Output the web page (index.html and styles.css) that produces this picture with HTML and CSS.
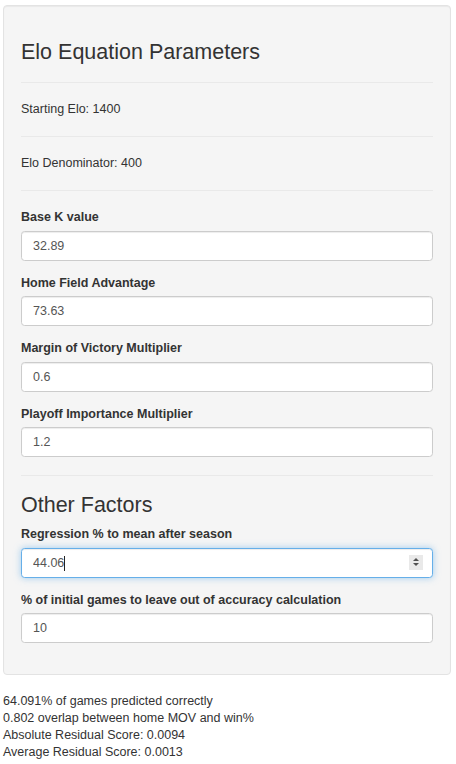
FILE: index.html
```html
<!DOCTYPE html>
<html lang="en">
<head>
<meta charset="utf-8">
<title>Elo Equation Parameters</title>
<link rel="stylesheet" href="styles.css">
</head>
<body>
<main class="page">
  <form class="well">
    <h3 class="section-title">Elo Equation Parameters</h3>
    <hr class="rule">
    <div class="stat">Starting Elo: 1400</div>
    <hr class="rule">
    <div class="stat">Elo Denominator: 400</div>
    <hr class="rule">
    <div class="form-group">
      <label class="control-label" for="k">Base K value</label>
      <input class="form-control" id="k" type="number" value="32.89">
    </div>
    <div class="form-group">
      <label class="control-label" for="hfa">Home Field Advantage</label>
      <input class="form-control" id="hfa" type="number" value="73.63">
    </div>
    <div class="form-group">
      <label class="control-label" for="mov">Margin of Victory Multiplier</label>
      <input class="form-control" id="mov" type="number" value="0.6">
    </div>
    <div class="form-group">
      <label class="control-label" for="po">Playoff Importance Multiplier</label>
      <input class="form-control" id="po" type="number" value="1.2">
    </div>
    <hr class="rule">
    <h3 class="section-title">Other Factors</h3>
    <div class="form-group">
      <label class="control-label" for="reg">Regression % to mean after season</label>
      <div class="input-wrap">
        <input class="form-control is-focused" id="reg" type="number" value="44.06">
        <span class="caret-line"></span>
        <span class="spinner"><span class="tri-up"></span><span class="tri-down"></span></span>
      </div>
    </div>
    <div class="form-group">
      <label class="control-label" for="skip">% of initial games to leave out of accuracy calculation</label>
      <input class="form-control" id="skip" type="number" value="10">
    </div>
  </form>
  <div class="results">
    <div>64.091% of games predicted correctly</div>
    <div>0.802 overlap between home MOV and win%</div>
    <div>Absolute Residual Score: 0.0094</div>
    <div>Average Residual Score: 0.0013</div>
  </div>
</main>
</body>
</html>
```
FILE: styles.css
```css
* { box-sizing: border-box; }

html, body {
  margin: 0;
  padding: 0;
  background: #fff;
}

body {
  font-family: "Liberation Sans", Arial, sans-serif;
  font-size: 12.5px;
  line-height: 17px;
  color: #333;
}

.page {
  padding: 5px 5px 0 3px;
}

.well {
  display: block;
  margin: 0 0 18px 0;
  padding: 17px;
  background: #f5f5f5;
  border: 1px solid #e3e3e3;
  border-radius: 4px;
  box-shadow: inset 0 1px 1px rgba(0, 0, 0, 0.05);
}

.section-title {
  margin: 18px 0 9px;
  font-size: 21.5px;
  line-height: 23px;
  font-weight: 500;
  color: #333;
}

.rule {
  margin: 18px 0;
  border: 0;
  border-top: 1px solid #e9e9e9;
  height: 0;
}

.stat {
  line-height: 17px;
}

.form-group {
  margin-bottom: 14px;
}

.control-label {
  display: inline-block;
  max-width: 100%;
  margin-bottom: 4.5px;
  font-weight: bold;
  line-height: 17px;
}

.form-control {
  display: block;
  width: 100%;
  height: 30px;
  margin: 0;
  padding: 5px 11px;
  font-family: inherit;
  font-size: 12.5px;
  line-height: 18px;
  color: #555;
  background: #fff;
  border: 1px solid #ccc;
  border-radius: 3.6px;
  box-shadow: inset 0 1px 1px rgba(0, 0, 0, 0.075);
  outline: none;
  -moz-appearance: textfield;
}

.form-control::-webkit-inner-spin-button,
.form-control::-webkit-outer-spin-button {
  -webkit-appearance: none;
  margin: 0;
}

.form-control.is-focused {
  border-color: #66afe9;
  box-shadow: inset 0 1px 1px rgba(0, 0, 0, 0.075), 0 0 7px rgba(102, 175, 233, 0.6);
}

.input-wrap {
  position: relative;
}

.caret-line {
  position: absolute;
  left: 43.3px;
  top: 8px;
  width: 1px;
  height: 15px;
  background: #222;
}

.spinner {
  position: absolute;
  right: 10px;
  top: 7px;
  width: 14px;
  height: 15px;
  background: #e9e9e9;
  display: flex;
  flex-direction: column;
  align-items: center;
  justify-content: center;
  gap: 2px;
}

.tri-up,
.tri-down {
  width: 0;
  height: 0;
  border-left: 3px solid transparent;
  border-right: 3px solid transparent;
}

.tri-up {
  border-bottom: 3px solid #505050;
}

.tri-down {
  border-top: 3px solid #505050;
}

.results {
  line-height: 17px;
  color: #333;
}
```
